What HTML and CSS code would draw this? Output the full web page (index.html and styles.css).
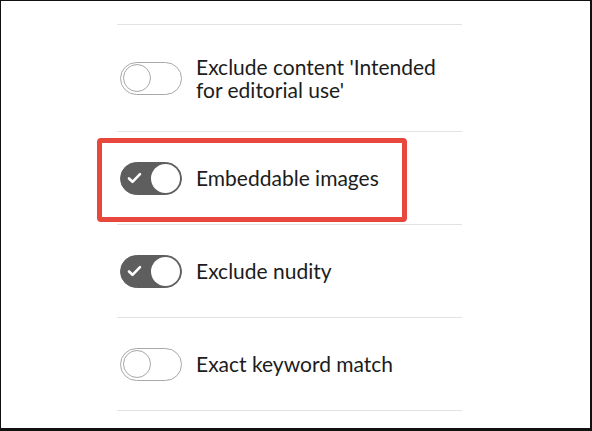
FILE: index.html
```html
<!DOCTYPE html>
<html>
<head>
<meta charset="utf-8">
<link rel="stylesheet" href="styles.css">
</head>
<body>
<div class="frame">
  <ul class="options">
    <li class="option">
      <span class="toggle"><span class="knob"></span></span>
      <span class="label">Exclude content 'Intended<br>for editorial use'</span>
    </li>
    <li class="option">
      <span class="toggle on">
        <svg class="check" viewBox="0 0 15 12" width="15" height="12"><path d="M2 6.5 L5.5 9.8 L13 2.2" fill="none" stroke="#fff" stroke-width="2.6" stroke-linecap="round" stroke-linejoin="round"/></svg>
        <span class="knob"></span>
      </span>
      <span class="label">Embeddable images</span>
    </li>
    <li class="option">
      <span class="toggle on">
        <svg class="check" viewBox="0 0 15 12" width="15" height="12"><path d="M2 6.5 L5.5 9.8 L13 2.2" fill="none" stroke="#fff" stroke-width="2.6" stroke-linecap="round" stroke-linejoin="round"/></svg>
        <span class="knob"></span>
      </span>
      <span class="label">Exclude nudity</span>
    </li>
    <li class="option">
      <span class="toggle"><span class="knob"></span></span>
      <span class="label">Exact keyword match</span>
    </li>
  </ul>
  <div class="highlight"></div>
</div>
</body>
</html>
```

FILE: styles.css
```css
html, body {
  margin: 0;
  padding: 0;
  background: #111;
}
.frame {
  position: relative;
  box-sizing: border-box;
  width: 592px;
  height: 431px;
  background: #fff;
  border-style: solid;
  border-color: #111;
  border-width: 1px 2px 3px 1px;
  overflow: hidden;
  font-family: Lato, "Open Sans", sans-serif;
  color: #1c1c1c;
}
.options {
  list-style: none;
  margin: 23px 0 0 116px;
  padding: 0;
  width: 345px;
  border-top: 1px solid #e2e2e2;
}
.option {
  display: flex;
  align-items: center;
  gap: 14px;
  padding: 29.5px 0;
  border-bottom: 1px solid #e2e2e2;
}
.toggle {
  position: relative;
  flex: none;
  box-sizing: border-box;
  width: 62px;
  height: 33px;
  margin-left: 3px;
  border: 1px solid #a8a8a8;
  border-radius: 17px;
  background: #fff;
  display: flex;
  align-items: center;
  padding: 0 2px;
}
.toggle .knob {
  box-sizing: border-box;
  width: 28px;
  height: 28px;
  border-radius: 50%;
  border: 1px solid #a8a8a8;
  background: #fff;
}
.toggle.on {
  background: #5e5e5e;
  border-color: #5e5e5e;
  justify-content: space-between;
  padding: 0 1px 0 6px;
}
.toggle.on .knob {
  border: none;
  width: 29px;
  height: 29px;
}
.check {
  display: block;
}
.label {
  font-size: 21px;
  line-height: 23.5px;
}
.highlight {
  position: absolute;
  left: 96px;
  top: 137px;
  width: 310px;
  height: 84px;
  box-sizing: border-box;
  border: 5px solid #e8473e;
  border-radius: 4px;
}
```
